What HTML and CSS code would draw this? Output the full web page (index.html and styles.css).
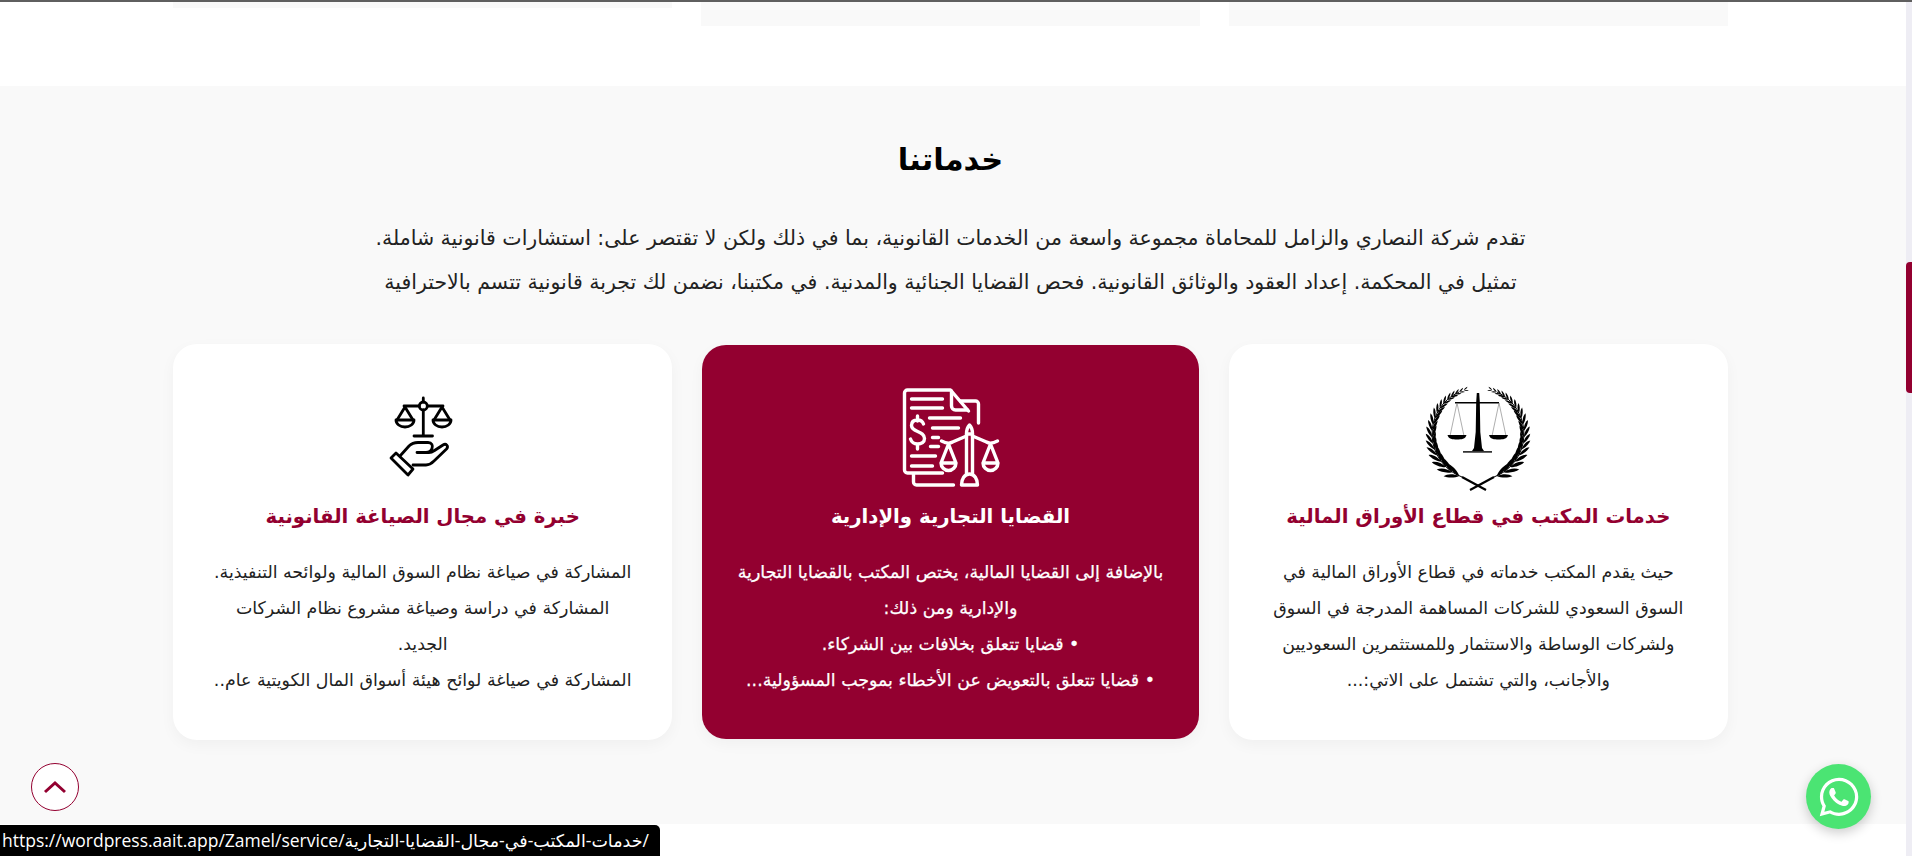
FILE: index.html
```html
<!DOCTYPE html>
<html lang="ar">
<head>
    <meta charset="UTF-8">
    <meta name="viewport" content="width=device-width, initial-scale=1.0">
    <title>خدماتنا</title>
    <link rel="stylesheet" href="styles.css">
</head>
<body>
    <div class="top_line"></div>
    <div class="layout">
        <main class="page" dir="rtl">
            <!-- بقايا القسم السابق -->
            <div class="prev_row">
                <div class="prev_box"></div>
                <div class="prev_box"></div>
                <div class="prev_box prev_short"></div>
            </div>

            <!-- خدماتنا -->
            <section class="services">
                <h2 class="services_title">خدماتنا</h2>
                <p class="services_intro">
                    تقدم شركة النصاري والزامل للمحاماة مجموعة واسعة من الخدمات القانونية، بما في ذلك ولكن لا تقتصر على: استشارات قانونية شاملة.<br>
                    تمثيل في المحكمة. إعداد العقود والوثائق القانونية. فحص القضايا الجنائية والمدنية. في مكتبنا، نضمن لك تجربة قانونية تتسم بالاحترافية
                </p>
                <div class="cards">
                    <article class="card">
                        <svg class="card_icon" viewBox="0 0 110 110">
                            <defs>
                                <g id="pair">
                                    <path d="M0 0C-3 3.500-9 6-13 6C-11 2.500-6 0 0 0Z"/>
                                    <path d="M0 0C-3-3.500-9-6-13-6C-11-2.500-6 0 0 0Z"/>
                                </g>
                                <g id="branch">
                                    <path d="M63 106 39 93" fill="none" stroke="#000" stroke-width="2.200"/>
                                    <path d="M39 93A46 46 0 0 1 36 8" fill="none" stroke="#000" stroke-width="1"/>
                                    <use href="#pair" transform="rotate(24 55 50) translate(55 96) scale(1.1)"/>
                                    <use href="#pair" transform="rotate(34 55 50) translate(55 96) scale(1.1)"/>
                                    <use href="#pair" transform="rotate(44 55 50) translate(55 96) scale(1.05)"/>
                                    <use href="#pair" transform="rotate(53 55 50) translate(55 96) scale(1)"/>
                                    <use href="#pair" transform="rotate(62 55 50) translate(55 96) scale(.95)"/>
                                    <use href="#pair" transform="rotate(70 55 50) translate(55 96) scale(.9)"/>
                                    <use href="#pair" transform="rotate(78 55 50) translate(55 96) scale(.85)"/>
                                    <use href="#pair" transform="rotate(86 55 50) translate(55 96) scale(.85)"/>
                                    <use href="#pair" transform="rotate(94 55 50) translate(55 96) scale(.8)"/>
                                    <use href="#pair" transform="rotate(102 55 50) translate(55 96) scale(.8)"/>
                                    <use href="#pair" transform="rotate(110 55 50) translate(55 96) scale(.75)"/>
                                    <use href="#pair" transform="rotate(117 55 50) translate(55 96) scale(.7)"/>
                                    <use href="#pair" transform="rotate(124 55 50) translate(55 96) scale(.65)"/>
                                    <use href="#pair" transform="rotate(131 55 50) translate(55 96) scale(.6)"/>
                                    <use href="#pair" transform="rotate(138 55 50) translate(55 96) scale(.55)"/>
                                    <use href="#pair" transform="rotate(144 55 50) translate(55 96) scale(.5)"/>
                                    <use href="#pair" transform="rotate(150 55 50) translate(55 96) scale(.45)"/>
                                    <use href="#pair" transform="rotate(156 55 50) translate(55 96) scale(.4)"/>
                                    <use href="#pair" transform="rotate(162 55 50) translate(55 96) scale(.35)"/>
                                </g>
                            </defs>
                            <use href="#branch"/>
                            <use href="#branch" transform="translate(110 0) scale(-1 1)"/>
                            <path d="M53.800 9h2.400l.6 9 .5 30 1.700 16 2 3h-12l2-3 1.700-16 .5-30Z"/>
                            <path d="M32 18h44v1.600H32Z"/>
                            <path d="M40 67.200h29v1.400H40Z"/>
                            <path d="M34 19 27 52M34 19 41 52M76 19 69 52M76 19 83 52" fill="none" stroke="#777" stroke-width=".6"/>
                            <path d="M24.500 51h19c-1 4-5 4.500-9.500 4.500S25.500 55 24.500 51Z"/>
                            <path d="M66 51h19c-1 4-5 4.500-9.500 4.500S67 55 66 51Z"/>
                        </svg>
                        <h3 class="card_title">خدمات المكتب في قطاع الأوراق المالية</h3>
                        <p class="card_text">
                            حيث يقدم المكتب خدماته في قطاع الأوراق المالية في<br>
                            السوق السعودي للشركات المساهمة المدرجة في السوق<br>
                            ولشركات الوساطة والاستثمار وللمستثمرين السعوديين<br>
                            والأجانب، والتي تشتمل على الاتي:...
                        </p>
                    </article>

                    <article class="card card_active">
                        <svg class="card_icon line_white" viewBox="15.500 14 110 110">
                            <path d="M62 103H27a3 3 0 0 1-3-3V23a3 3 0 0 1 3-3h43l18 21"/>
                            <path d="M71 21v15a4 4 0 0 0 4 4h12"/>
                            <path d="M80 31h15a3 3 0 0 1 3 3v19"/>
                            <path d="M33 104v8a3 3 0 0 0 3 3h37"/>
                            <path d="M31 29h31M31 38h31M49 48h31M52 58h26M52 67.500h6M50 76.500h8M31 86h24M31 96h21"/>
                            <path d="M43 54c-1-3-3-4-6-4-4 0-6 2-6 5.500 0 7 13 5 13 13 0 3.500-3 5.500-7 5.500-3 0-6-2-7-5M37 46v5M37 74v5"/>
                            <path d="M89 55c-2 2-3 5-3 9h6c0-4-1-7-3-9Z"/>
                            <path d="M86 64v40M92 64v40"/>
                            <path d="M81 115c0-6 3-11 8-11s8 5 8 11Z"/>
                            <path d="M61 71c4 2 8 3 11 1l14-6M92 66l14 6c3 2 7 1 11-1"/>
                            <path d="M68 74 60.500 93a7.500 7.500 0 0 0 15 0ZM60.500 93h15"/>
                            <path d="M110 74l-7.500 19a7.500 7.500 0 0 0 15 0ZM102.500 93h15"/>
                        </svg>
                        <h3 class="card_title">القضايا التجارية والإدارية</h3>
                        <p class="card_text">
                            بالإضافة إلى القضايا المالية، يختص المكتب بالقضايا التجارية<br>
                            والإدارية ومن ذلك:<br>
                            • قضايا تتعلق بخلافات بين الشركاء.<br>
                            • قضايا تتعلق بالتعويض عن الأخطاء بموجب المسؤولية...
                        </p>
                    </article>

                    <article class="card">
                        <svg class="card_icon line_black" viewBox="-3 4 110 110">
                            <circle cx="52.300" cy="26" r="4"/>
                            <path d="M52.300 18v4M33 26h15.300M56.300 26H72M52.300 30v26M43 56h18.500"/>
                            <path d="M34 27 26 40M34 27 42 40M71 27 63 40M71 27 79 40"/>
                            <path d="M25 40h18c0 4-4 7-9 7s-9-3-9-7Z"/>
                            <path d="M62 40h18c0 4-4 7-9 7s-9-3-9-7Z"/>
                            <path d="M20 78 25 73 42 89 37 95Z"/>
                            <path d="M29 76 38 66c3-3 6-3.500 9-3.500h10c4 0 5 3 4 6s-3 4-6 4h-9M55 72.500h3c2 0 4-1 5.500-2l8.500-5.500c3-2 6 1 3.500 4L63 81c-3 3-5 4-8 4H42"/>
                        </svg>
                        <h3 class="card_title">خبرة في مجال الصياغة القانونية</h3>
                        <p class="card_text">
                            المشاركة في صياغة نظام السوق المالية ولوائحه التنفيذية.<br>
                            المشاركة في دراسة وصياغة مشروع نظام الشركات<br>
                            الجديد.<br>
                            المشاركة في صياغة لوائح هيئة أسواق المال الكويتية عام..
                        </p>
                    </article>
                </div>
            </section>
        </main>

        <!-- شريط التمرير -->
        <aside class="scroll_track">
            <div class="scroll_thumb"></div>
        </aside>
    </div>

    <a href="#" class="to_top">
        <svg viewBox="0 0 24 14"><path d="M2 12 12 3l10 9"/></svg>
    </a>
    <a href="#" class="whatsapp">
        <svg viewBox="0 0 448 512"><path d="M380.900 97.100C339 55.100 283.200 32 223.900 32c-122.400 0-222 99.600-222 222 0 39.100 10.200 77.300 29.600 111L0 480l117.700-30.900c32.400 17.700 68.900 27 106.100 27h.1c122.300 0 224.100-99.600 224.100-222 0-59.300-25.200-115-67.100-157zm-157 341.600c-33.200 0-65.700-8.900-94-25.700l-6.700-4-69.800 18.300L72 359.200l-4.400-7c-18.500-29.400-28.200-63.300-28.200-98.200 0-101.700 82.800-184.500 184.600-184.500 49.300 0 95.600 19.200 130.400 54.100 34.800 34.900 56.200 81.200 56.100 130.500 0 101.800-84.900 184.600-186.600 184.600zm101.200-138.200c-5.500-2.800-32.800-16.200-37.900-18-5.100-1.900-8.800-2.800-12.500 2.800-3.700 5.600-14.300 18-17.600 21.800-3.200 3.700-6.500 4.200-12 1.400-32.600-16.300-54-29.100-75.500-66-5.700-9.800 5.700-9.100 16.300-30.300 1.800-3.700.9-6.900-.5-9.700-1.400-2.800-12.500-30.100-17.100-41.200-4.500-10.800-9.100-9.300-12.500-9.500-3.200-.2-6.900-.2-10.600-.2-3.700 0-9.700 1.400-14.800 6.900-5.100 5.600-19.400 19-19.400 46.300 0 27.300 19.900 53.700 22.600 57.400 2.800 3.700 39.100 59.700 94.800 83.800 35.200 15.200 49 16.500 66.600 13.900 10.700-1.600 32.800-13.400 37.400-26.400 4.600-13 4.600-24.100 3.200-26.400-1.300-2.500-5-3.900-10.500-6.600z"/></svg>
    </a>
    <div class="status_bar" dir="ltr">https://wordpress.aait.app/Zamel/service/خدمات-المكتب-في-مجال-القضايا-التجارية/</div>
</body>
</html>
```

FILE: styles.css
```css
*{
    margin: 0;
    padding: 0;
    box-sizing: border-box;
}
html,body{
    height: 100%;
    overflow: hidden;
}
body{
    display: flex;
    flex-direction: column;
    background-color: #fff;
    color: #222;
    font-family: "DejaVu Sans", "Noto Sans", sans-serif;
}
.top_line{
    height: 2px;
    background-color: #5f5f5f;
    flex-shrink: 0;
}
.layout{
    display: flex;
    flex: 1;
}
.page{
    flex: 1;
    min-width: 0;
}
.scroll_track{
    width: 6px;
    background-color: #eeedf4;
    padding-top: 260px;
}
.scroll_thumb{
    height: 131px;
    background-color: #930030;
    border-radius: 4px 0 0 4px;
}

.prev_row{
    display: grid;
    grid-template-columns: repeat(3, 1fr);
    gap: 28.5px;
    align-items: start;
    height: 84px;
    padding: 0 178px 0 173px;
}
.prev_box{
    height: 24px;
    background-color: #f9f9f9;
}
.prev_short{
    height: 6px;
}

.services{
    height: 738px;
    padding: 54px 178px 0 173px;
    background-color: #f9f9f9;
    text-align: center;
}
.services_title{
    font-size: 30.5px;
    line-height: 40px;
    color: #000;
}
.services_intro{
    margin-top: 36px;
    font-size: 20.5px;
    line-height: 44px;
    color: #222;
    white-space: nowrap;
}
.cards{
    display: grid;
    grid-template-columns: repeat(3, 1fr);
    gap: 28.5px;
    margin-top: 40px;
}
.card{
    display: flex;
    flex-direction: column;
    align-items: center;
    height: 396px;
    padding-top: 40px;
    background-color: #fff;
    border-radius: 24px;
    box-shadow: 0 5px 15px rgba(0,0,0,.04);
}
.card_icon{
    width: 110px;
    height: 110px;
    flex-shrink: 0;
}
.line_white,.line_black{
    fill: none;
    stroke-linecap: round;
    stroke-linejoin: round;
}
.line_white{
    stroke: #fff;
    stroke-width: 3.400;
}
.line_black{
    stroke: #000;
    stroke-width: 2.800;
}
.card_title{
    margin-top: 8px;
    font-size: 19.7px;
    line-height: 30px;
    color: #930030;
}
.card_text{
    margin-top: 22px;
    font-size: 17.4px;
    line-height: 36px;
    white-space: nowrap;
    color: #222;
}
.card_active{
    height: 394px;
    margin: 1px;
    padding-top: 39px;
    background-color: #930030;
}
.card_active .card_title,.card_active .card_text{
    color: #fff;
}
.card_active .card_text{
    -webkit-text-stroke: .25px #fff;
}

.to_top{
    position: fixed;
    left: 31px;
    top: 763px;
    width: 48px;
    height: 48px;
    display: flex;
    align-items: center;
    justify-content: center;
    background-color: #fff;
    border: 1px solid #930030;
    border-radius: 50%;
}
.to_top svg{
    width: 24px;
    height: 14px;
    fill: none;
    stroke: #930030;
    stroke-width: 3;
}
.whatsapp{
    position: fixed;
    left: 1806px;
    top: 764px;
    width: 65px;
    height: 65px;
    display: flex;
    align-items: center;
    justify-content: center;
    background-color: #4be473;
    border-radius: 50%;
    box-shadow: 0 4px 12px rgba(0,0,0,.2);
}
.whatsapp svg{
    width: 40px;
    height: 44px;
    fill: #fff;
}
.status_bar{
    position: fixed;
    left: 0;
    bottom: 0;
    width: 660px;
    height: 31px;
    padding-left: 2px;
    background-color: #000;
    border-radius: 0 5px 0 0;
    color: #fff;
    font-family: "Open Sans", "DejaVu Sans", sans-serif;
    font-size: 17.5px;
    line-height: 31px;
    white-space: nowrap;
    overflow: hidden;
}
```
